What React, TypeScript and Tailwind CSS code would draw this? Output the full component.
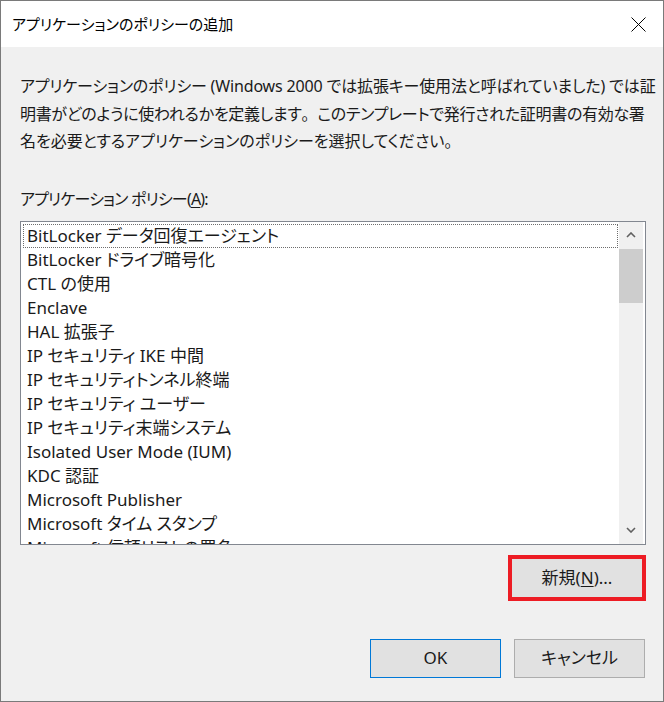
import React from "react";

const items = [
  "BitLocker データ回復エージェント",
  "BitLocker ドライブ暗号化",
  "CTL の使用",
  "Enclave",
  "HAL 拡張子",
  "IP セキュリティ IKE 中間",
  "IP セキュリティトンネル終端",
  "IP セキュリティ ユーザー",
  "IP セキュリティ末端システム",
  "Isolated User Mode (IUM)",
  "KDC 認証",
  "Microsoft Publisher",
  "Microsoft タイム スタンプ",
  "Microsoft 信頼リストの署名",
];

const font = { fontFamily: '"Noto Sans", "Noto Sans CJK JP", sans-serif' };

export default function App() {
  return (
    <div
      className="w-[664px] h-[702px] border border-[#7a7a7a] flex flex-col bg-[#f0f0f0] text-black overflow-hidden [font-feature-settings:'palt']"
      style={font}
    >
      {/* title bar */}
      <div className="h-[46px] bg-white flex items-center justify-between pl-[11px] pr-[17px] shrink-0">
        <span className="text-[15px] leading-none">アプリケーションのポリシーの追加</span>
        <svg width="15" height="15" viewBox="0 0 15 15" className="mt-[1px]">
          <path d="M0.5 0.5 L14.5 14.5 M14.5 0.5 L0.5 14.5" stroke="#000" strokeWidth="1" fill="none" />
        </svg>
      </div>

      {/* body */}
      <div className="flex-1 flex flex-col pl-[19px] pt-[26px]">
        <div className="text-[16px] leading-[27.5px] text-[#1a1a1a] whitespace-nowrap">
          <div className="tracking-[-0.15px]">アプリケーションのポリシー (Windows 2000 では拡張キー使用法と呼ばれていました) では証</div>
          <div className="tracking-[-0.3px]">
            明書がどのように使われるかを定義します<span className="[font-feature-settings:normal]">。</span>このテンプレートで発行された証明書の有効な署
          </div>
          <div>名を必要とするアプリケーションのポリシーを選択してください。</div>
        </div>

        <div className="mt-[33px] text-[16px] leading-[20px] text-[#1a1a1a] tracking-[-0.8px]">
          アプリケーション ポリシー(<span className="underline underline-offset-2">A</span>):
        </div>

        {/* listbox */}
        <div className="mt-[12px] w-[626px] h-[324px] border border-[#828790] bg-white flex">
          <div className="flex-1 pt-[2px] pl-[2px] pr-[1px] overflow-hidden">
            {items.map((t, i) => (
              <div
                key={t}
                className={
                  "h-[24px] flex items-center pl-[3px] text-[17px] whitespace-nowrap text-[#1a1a1a] " +
                  (i === 0 ? "border border-dotted border-[#6d6d6d]" : "border border-transparent")
                }
              >
                {t}
              </div>
            ))}
          </div>
          <div className="w-[24px] bg-[#f0f0f0] flex flex-col items-center mr-[2px]">
            <div className="h-[27px] w-full flex items-center justify-center">
              <svg width="10" height="6" viewBox="0 0 10 6">
                <path d="M1 5 L5 1 L9 5" stroke="#606060" strokeWidth="1.6" fill="none" />
              </svg>
            </div>
            <div className="w-full h-[54px] bg-[#cdcdcd]" />
            <div className="flex-1" />
            <div className="h-[27px] w-full flex items-center justify-center">
              <svg width="10" height="6" viewBox="0 0 10 6">
                <path d="M1 1 L5 5 L9 1" stroke="#606060" strokeWidth="1.6" fill="none" />
              </svg>
            </div>
          </div>
        </div>

        {/* new button */}
        <div className="flex justify-end pr-[17px] mt-[10px]">
          <div className="w-[138px] h-[46px] border-[4px] border-[#ed1c24] bg-[#e1e1e1] flex items-center justify-center text-[17px] text-[#1a1a1a]">
            新規(<span className="underline underline-offset-2">N</span>)...
          </div>
        </div>

        {/* OK / Cancel */}
        <div className="flex justify-end gap-[13px] pr-[18px] mt-[38px]">
          <div className="w-[131px] h-[39px] border border-[#0078d7] bg-[#e1e1e1] flex items-center justify-center text-[17px] text-[#1a1a1a]">
            OK
          </div>
          <div className="w-[131px] h-[39px] border border-[#adadad] bg-[#e1e1e1] flex items-center justify-center text-[17px] text-[#1a1a1a]">
            キャンセル
          </div>
        </div>
      </div>
    </div>
  );
}
